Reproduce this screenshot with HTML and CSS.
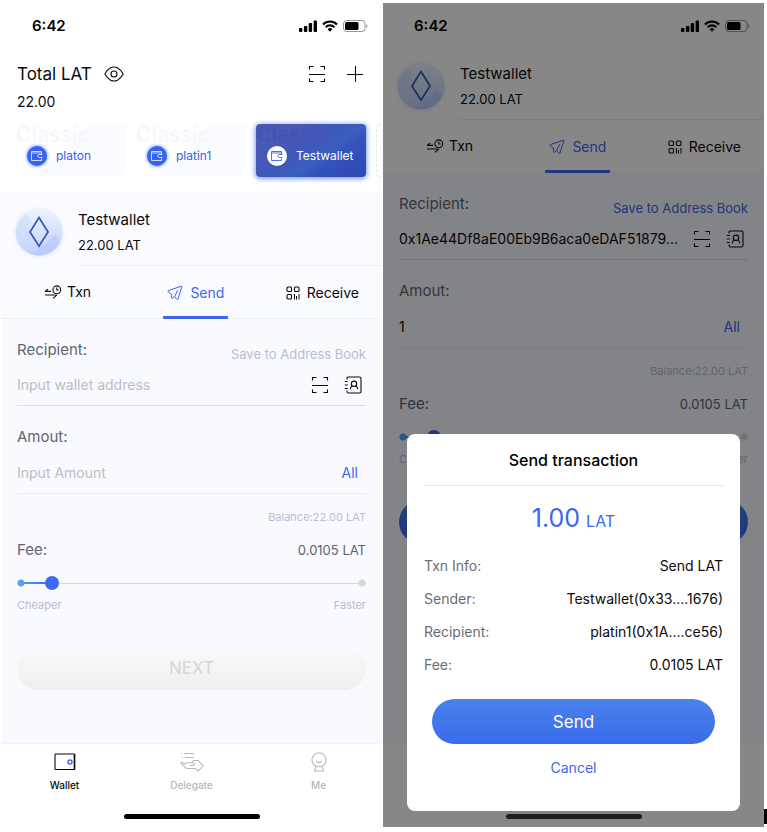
FILE: index.html
```html
<!DOCTYPE html>
<html lang="en">
<head>
<meta charset="utf-8">
<meta name="viewport" content="width=device-width, initial-scale=1">
<title>LAT Wallet</title>
<link rel="stylesheet" href="styles.css">
</head>
<body>
<svg class="sprite" aria-hidden="true">
  <symbol id="i-signal" viewBox="0 0 18 12"><rect x="0" y="8" width="3.400" height="4" rx="1"/><rect x="4.900" y="6" width="3.400" height="6" rx="1"/><rect x="9.700" y="3" width="3.400" height="9" rx="1"/><rect x="14.600" y="0.500" width="3.400" height="11.500" rx="1"/></symbol>
  <symbol id="i-wifi" viewBox="0 0 16 12"><path d="M1 4.400a10 10 0 0 1 14 0M3.600 7.200a6.300 6.300 0 0 1 8.800 0" fill="none" stroke="currentColor" stroke-width="2.100"/><path d="M5.600 9.200a3.400 3.400 0 0 1 4.800 0L8 11.800z"/></symbol>
  <symbol id="i-battery" viewBox="0 0 25 12"><rect x=".5" y=".5" width="21.500" height="11" rx="3" fill="none" stroke="currentColor" stroke-opacity=".4"/><rect x="2" y="2" width="13.500" height="8" rx="1.500"/><path d="M23.200 4v4q1.300-.6 1.300-2t-1.300-2" fill-opacity=".4"/></symbol>
  <symbol id="i-eye" viewBox="0 0 20 16"><path d="M.8 8Q3.400 3.600 6.600 1.800q3.400-1.600 6.800 0Q16.600 3.600 19.200 8q-2.600 4.400-5.800 6.200-3.400 1.600-6.800 0Q3.400 12.400.8 8z"/><circle cx="10" cy="8" r="3"/></symbol>
  <symbol id="i-scan" viewBox="0 0 18 18"><path d="M1.500 4.500v-3h4M12.500 1.500h4v3M1.500 13.500v3h4M12.500 16.500h4v-3M1 9.500h16"/></symbol>
  <symbol id="i-plus" viewBox="0 0 18 18"><path d="M1 9.500h16M9.500 1v16"/></symbol>
  <symbol id="i-purse" viewBox="0 0 12 10"><path d="M10.500 3V.5H.5v9h10V7.500M.5 2h10M11.500 3.500H8.200L6.500 5l1.700 1.500h3.300" stroke-width=".9"/></symbol>
  <symbol id="i-txn" viewBox="0 0 18 15"><circle cx="12.800" cy="4.800" r="3.900"/><path d="M12.800 2.600v2.400h2M1 6.400h6M1 6.400l3-2.200M1 10h10.500M13 9.800l-4 3.500"/></symbol>
  <symbol id="i-send" viewBox="0 0 16 16"><path d="M14.200 1.200q.8-.2.600.6L11 14.200q-.4.900-1 .1L7.600 11.400l-2 1.800q-.9.500-1-.5l-.4-3.700L1 6.600q-.6-.6.200-.9zM7.600 11.400l3.200-6.200"/></symbol>
  <symbol id="i-receive" viewBox="0 0 14 14"><rect x="1" y="1" width="4.500" height="4.500" rx="1"/><rect x="8.500" y="1" width="4.500" height="4.500" rx="1"/><rect x="1" y="8.500" width="4.500" height="4.500" rx="1"/><path d="M8.500 8v5.500M10.500 10v3.500M13 8v5.500" stroke-width="1"/></symbol>
  <symbol id="i-book" viewBox="0 0 18 18"><path d="M3 3.500V2.200Q3 1 4.500 1h11q1.500 0 1.500 1.500v13q0 1.500-1.500 1.500h-11Q3 17 3 15.500v-1M.8 5.500h3M.8 9h3M.8 12.500h3"/><circle cx="10" cy="7.800" r="2.700"/><path d="M6.500 13.200V12q.3-1.300 2.200-2.100M13.500 13.200V12q-.3-1.300-2.200-2.100"/></symbol>
  <symbol id="i-wallet" viewBox="0 0 22 18"><rect x="1" y="1" width="19.500" height="15.500" rx=".5"/><path d="M20.500 1v15.500" stroke-width="1.600"/><circle cx="16" cy="9" r="2" stroke="#3c6cf5" stroke-width="1.500"/></symbol>
  <symbol id="i-delegate" viewBox="0 0 24 20"><path d="M1 1.500h1.200M4 1.500h10M2 5.500h1.200M5 5.500h9M9.500 13.500h4q1.600-.8.400-2.200L9.800 10.800H7.200L4.500 12 2.300 10.200Q.8 10 1 11.400L5.500 15.600q1 .9 2.500.9h7l3.300 2.500 4.700-5.200-4.800-5.300h-4.700l-1.500 1.600"/></symbol>
  <symbol id="i-me" viewBox="0 0 16 20"><circle cx="8" cy="7.800" r="7"/><path d="M5 9q3 3.200 6 0M5 14.300 3.500 19h9L11 14.300"/></symbol>
  <symbol id="i-avatar" viewBox="0 0 48 48"><defs><linearGradient id="avatarFill" x1="0" y1="0" x2="0" y2="1"><stop offset="0" stop-color="#edf3fe"/><stop offset="1" stop-color="#c1cffb"/></linearGradient><clipPath id="avatarClip"><circle cx="24" cy="24" r="23.500"/></clipPath></defs><circle cx="24" cy="24" r="23.500" fill="url(#avatarFill)"/><g clip-path="url(#avatarClip)"><path d="M0 22 10 5l6 8L4 32zM6 30l10-10v12L10 40z" fill="#cbdcf8" opacity=".6"/><path d="M14 48 38 30l10 12-8 8zM32 34l8-8 8 12v10z" fill="#b1c3fa" opacity=".5"/></g><path d="M24 9.500 33 24l-9 14.200L15 24z" fill="none" stroke="#3158b8" stroke-width="1.700"/></symbol>
</svg>

<main class="board">
  <section class="screen" aria-label="Wallet">
    <header class="status">
      <span class="clock">6:42</span>
      <span class="status-icons"><svg class="signal"><use href="#i-signal"/></svg><svg class="wifi"><use href="#i-wifi"/></svg><svg class="battery"><use href="#i-battery"/></svg></span>
    </header>

    <div class="summary">
      <div class="summary-top">
        <h1 class="total">Total LAT</h1>
        <button class="icon-btn" type="button" aria-label="Hide balance"><svg class="line eye"><use href="#i-eye"/></svg></button>
        <div class="summary-actions">
          <button class="icon-btn" type="button" aria-label="Scan"><svg class="line i18"><use href="#i-scan"/></svg></button>
          <button class="icon-btn" type="button" aria-label="Add wallet"><svg class="line i18"><use href="#i-plus"/></svg></button>
        </div>
      </div>
      <p class="total-value">22.00</p>
    </div>

    <div class="cards">
      <button class="card" type="button"><span class="card-kind">Classic</span><span class="card-badge"><svg class="line purse"><use href="#i-purse"/></svg></span><span class="card-name">platon</span></button>
      <button class="card" type="button"><span class="card-kind">Classic</span><span class="card-badge"><svg class="line purse"><use href="#i-purse"/></svg></span><span class="card-name">platin1</span></button>
      <button class="card card-active" type="button"><span class="card-kind">Classic</span><span class="card-badge"><svg class="line purse"><use href="#i-purse"/></svg></span><span class="card-name">Testwallet</span></button>
      <button class="card card-add" type="button" aria-label="New wallet"></button>
    </div>

    <div class="account">
      <svg class="avatar"><use href="#i-avatar"/></svg>
      <div class="account-text"><h2 class="account-name">Testwallet</h2><p class="account-balance">22.00 LAT</p></div>
    </div>
    <nav class="tabs">
      <a class="tab tab-first" href="#txn"><svg class="line txn"><use href="#i-txn"/></svg>Txn</a>
      <a class="tab tab-active" href="#send"><svg class="line i16"><use href="#i-send"/></svg>Send</a>
      <a class="tab" href="#receive"><svg class="line i14"><use href="#i-receive"/></svg>Receive</a>
    </nav>

    <form class="form">
      <div class="row"><label class="label" for="to">Recipient:</label><button class="text-btn save" type="button" disabled>Save to Address Book</button></div>
      <div class="field">
        <input class="input" id="to" type="text" placeholder="Input wallet address">
        <button class="icon-btn" type="button" aria-label="Scan address"><svg class="line i18"><use href="#i-scan"/></svg></button>
        <button class="icon-btn" type="button" aria-label="Address book"><svg class="line i18"><use href="#i-book"/></svg></button>
      </div>
      <div class="row row-amount"><label class="label" for="amount">Amout:</label></div>
      <div class="field field-amount">
        <input class="input" id="amount" type="text" placeholder="Input Amount">
        <button class="text-btn all" type="button">All</button>
      </div>
      <p class="balance">Balance:22.00 LAT</p>
      <div class="row row-fee"><label class="label" for="fee">Fee:</label><output class="fee-value" for="fee">0.0105 LAT</output></div>
      <input class="slider" id="fee" type="range" min="0" max="200" value="17">
      <div class="scale"><span>Cheaper</span><span>Faster</span></div>
      <button class="next" type="button" disabled>NEXT</button>
    </form>

    <footer class="tabbar">
      <a class="nav nav-active" href="#wallet"><svg class="line nav-wallet"><use href="#i-wallet"/></svg>Wallet</a>
      <a class="nav" href="#delegate"><svg class="line nav-delegate"><use href="#i-delegate"/></svg>Delegate</a>
      <a class="nav" href="#me"><svg class="line nav-me"><use href="#i-me"/></svg>Me</a>
    </footer>
    <span class="home-bar"></span>
  </section>

  <section class="screen" aria-label="Confirm transaction">
    <header class="status">
      <span class="clock">6:42</span>
      <span class="status-icons"><svg class="signal"><use href="#i-signal"/></svg><svg class="wifi"><use href="#i-wifi"/></svg><svg class="battery"><use href="#i-battery"/></svg></span>
    </header>
    <div class="account account-plain">
      <svg class="avatar"><use href="#i-avatar"/></svg>
      <div class="account-text"><h2 class="account-name">Testwallet</h2><p class="account-balance">22.00 LAT</p></div>
    </div>
    <nav class="tabs tabs-plain">
      <a class="tab tab-first" href="#txn"><svg class="line txn"><use href="#i-txn"/></svg>Txn</a>
      <a class="tab tab-active" href="#send"><svg class="line i16"><use href="#i-send"/></svg>Send</a>
      <a class="tab" href="#receive"><svg class="line i14"><use href="#i-receive"/></svg>Receive</a>
    </nav>
    <form class="form">
      <div class="row"><label class="label" for="to2">Recipient:</label><button class="text-btn save" type="button">Save to Address Book</button></div>
      <div class="field">
        <input class="input" id="to2" type="text" value="0x1Ae44Df8aE00Eb9B6aca0eDAF51879...">
        <button class="icon-btn" type="button" aria-label="Scan address"><svg class="line i18"><use href="#i-scan"/></svg></button>
        <button class="icon-btn" type="button" aria-label="Address book"><svg class="line i18"><use href="#i-book"/></svg></button>
      </div>
      <div class="row row-amount"><label class="label" for="amount2">Amout:</label></div>
      <div class="field field-amount">
        <input class="input" id="amount2" type="text" value="1">
        <button class="text-btn all" type="button">All</button>
      </div>
      <p class="balance">Balance:22.00 LAT</p>
      <div class="row row-fee"><label class="label" for="fee2">Fee:</label><output class="fee-value" for="fee2">0.0105 LAT</output></div>
      <input class="slider" id="fee2" type="range" min="0" max="200" value="17">
      <div class="scale"><span>Cheaper</span><span>Faster</span></div>
      <button class="next next-ready" type="button" aria-label="Next"></button>
    </form>
    <footer class="tabbar"></footer>

    <div class="overlay">
      <div class="modal" role="dialog" aria-labelledby="modal-title">
        <h2 class="modal-title" id="modal-title">Send transaction</h2>
        <p class="modal-amount"><span>1.00</span><span class="unit">LAT</span></p>
        <dl class="details">
          <div class="detail"><dt>Txn Info:</dt><dd>Send LAT</dd></div>
          <div class="detail"><dt>Sender:</dt><dd>Testwallet(0x33....1676)</dd></div>
          <div class="detail"><dt>Recipient:</dt><dd>platin1(0x1A....ce56)</dd></div>
          <div class="detail"><dt>Fee:</dt><dd>0.0105 LAT</dd></div>
        </dl>
        <button class="modal-send" type="button">Send</button>
        <button class="modal-cancel" type="button">Cancel</button>
      </div>
    </div>
    <span class="home-bar home-bar-dim"></span>
  </section>
  <span class="caret"></span>
</main>
</body>
</html>
```
FILE: styles.css
```css
* { box-sizing: border-box; }

body {
  margin: 0;
  background: #fff;
  color: #0b0b0d;
  font-family: Inter, "Liberation Sans", sans-serif;
  font-size: 14px;
  line-height: 20px;
}

h1, h2, p, dl, dd { margin: 0; font-weight: 400; }
a { color: inherit; text-decoration: none; }
button, input { font: inherit; color: inherit; }
button { padding: 0; border: 0; background: none; }
svg { display: block; flex: none; fill: currentColor; }
.sprite { position: absolute; width: 0; height: 0; }

.line { fill: none; stroke: currentColor; stroke-width: 1.1; }
.i18 { width: 18px; height: 18px; }
.i16 { width: 16px; height: 16px; stroke-width: 1; }
.i14 { width: 14px; height: 14px; }

.board {
  position: relative;
  display: grid;
  grid-template-columns: 1fr 1fr;
  gap: 1px;
  min-height: 100vh;
  padding: 3px 3px 5px 1px;
}
.caret {
  position: absolute;
  right: 0;
  bottom: 8px;
  width: 3px;
  height: 15px;
  background: #000;
}

.screen {
  position: relative;
  display: flex;
  flex-direction: column;
  min-width: 0;
  overflow: hidden;
  background: #fff;
}

/* Status bar */
.status {
  display: flex;
  align-items: center;
  justify-content: space-between;
  height: 46px;
  padding: 0 14px 0 31px;
  color: #000;
}
.clock { font-size: 15px; font-weight: 600; line-height: 22px; }
.status-icons { display: flex; align-items: center; gap: 5px; }
.signal { width: 18px; height: 12px; }
.wifi { width: 16px; height: 12px; }
.battery { width: 25px; height: 12px; }

/* Balance summary */
.summary { padding: 12px 18px 0 16px; }
.summary-top { display: flex; align-items: center; gap: 12px; height: 26px; }
.total { font-size: 17px; }
.eye { width: 20px; height: 16px; }
.summary-actions { display: flex; gap: 20px; margin-left: auto; }
.total-value { margin-top: 5px; }

/* Wallet cards */
.cards { display: flex; gap: 10px; padding: 12px 0 16px 15px; }
.card {
  position: relative;
  display: flex;
  flex: 0 0 110px;
  align-items: flex-end;
  gap: 9px;
  height: 53px;
  padding: 0 0 11px 11px;
  border-radius: 4px;
  background: linear-gradient(135deg, #fff 45%, #f9fbff 46%, #fbfcff);
  color: #3c63e8;
  font-size: 12px;
}
.card-kind {
  position: absolute;
  top: 0;
  left: 0;
  color: #f6f7fc;
  font-size: 21px;
  font-weight: 600;
  line-height: 22px;
}
.card-badge {
  position: relative;
  display: flex;
  align-items: center;
  justify-content: center;
  width: 20px;
  height: 20px;
  border-radius: 50%;
  background: #3863f2;
  box-shadow: 0 0 3px 1px #9fb6fb;
  color: #dfe7ff;
}
.purse { width: 12px; height: 10px; }
.card-name { position: relative; line-height: 20px; }
.card-active {
  background: linear-gradient(145deg, #4a58b6 0 25%, #3f58b9 45%, #3a5fc0 60%, #3553bc 68%, #2c47b4);
  box-shadow: 0 1px 5px 1px #7e9af2;
  color: #fff;
}
.card-active .card-kind { color: #4155b5; }
.card-active .card-badge { background: #fff; box-shadow: none; color: #3c63e8; }
.card-add { background: #fff; border: 1px dashed #e3e5f1; }

/* Account header */
.account {
  display: flex;
  height: 73px;
  padding-left: 14px;
  background: #fafbff;
}
.avatar { width: 48px; height: 48px; margin: 15px 15px 0 0; filter: drop-shadow(0 1px 2px #dfe6fb); }
.account-text { flex: 1; padding-top: 16px; border-bottom: 1px solid #ebedf4; }
.account-name { font-size: 15px; line-height: 22px; }
.account-balance { margin-top: 5px; font-size: 13px; line-height: 18px; }
.account-plain { height: 71px; background: #fff; }
.account-plain .avatar { margin-top: 13px; }
.account-plain .account-text { padding-top: 14px; }

.tabs {
  display: flex;
  justify-content: space-between;
  height: 53px;
  padding: 0 23px 0 43px;
  border-bottom: 1px solid #eceff5;
  background: #fafbff;
}
.tabs-plain { background: #fff; border-color: #f8faff; }
.tab { display: flex; align-items: center; gap: 7px; padding-top: 2px; }
.tab-first { gap: 5px; padding: 0 15px 0 0; }
.txn { width: 18px; height: 15px; }
.tab-active {
  justify-content: center;
  width: 65px;
  margin-bottom: -1px;
  padding-top: 4px;
  border-bottom: 3px solid #3c66ee;
  border-radius: 1px;
  color: #3c66ee;
}

/* Transfer form */
.form {
  display: flex;
  flex: 1;
  flex-direction: column;
  padding: 20px 16px 0;
  background: #f8faff;
}
.row { display: flex; align-items: center; justify-content: space-between; height: 22px; }
.label { color: #61646e; font-size: 15px; }
.text-btn { color: #3c66ee; font-size: 14px; }
.save { padding-top: 8px; font-size: 13px; }
.save:disabled { color: #b9bcd3; }
.field {
  display: flex;
  align-items: center;
  gap: 15px;
  height: 45px;
  padding: 4px 4px 0 0;
  border-bottom: 1px solid #dcdfe8;
}
.input {
  flex: 1;
  min-width: 0;
  height: 20px;
  padding: 0;
  border: 0;
  outline: 0;
  background: none;
}
.input::placeholder { color: #babdc8; opacity: 1; }
.row-amount { margin-top: 20px; }
.field-amount { height: 46px; padding: 5px 8px 0 0; border-color: #e8ebf3; }
.balance { margin-top: 13px; color: #b9bcd3; font-size: 11px; text-align: right; }
.row-fee { margin-top: 12px; }
.fee-value { color: #5f626c; font-size: 13px; }
.slider {
  width: 100%;
  height: 14px;
  margin: 15px 0 0;
  appearance: none;
  background:
    radial-gradient(circle at 4px 7px, #559ff5 3px, transparent 4px),
    radial-gradient(circle at calc(100% - 4px) 7px, #d5d7df 3px, transparent 4px),
    linear-gradient(90deg, #559ff5, #3c66ee) 3px 6px / 32px 2px no-repeat,
    linear-gradient(#d5d7df, #d5d7df) 0 7px / 100% 1px no-repeat;
}
.slider::-webkit-slider-thumb {
  width: 14px;
  height: 14px;
  appearance: none;
  border-radius: 50%;
  background: #3e6af2;
}
.scale {
  display: flex;
  justify-content: space-between;
  margin-top: 5px;
  color: #b9bcd3;
  font-size: 11px;
}
.next {
  height: 44px;
  margin: 31px 0 53px;
  border-radius: 22px;
  background: linear-gradient(#fafafa, #eee);
  color: #d6d6d6;
  font-size: 17px;
}
.next-ready { background: linear-gradient(#4980ec, #3566e8); }

/* Bottom navigation */
.tabbar {
  display: grid;
  grid-template-columns: repeat(3, 1fr);
  height: 84px;
  border-top: 1px solid #f1f3f8;
  background: #fff;
}
.nav {
  display: flex;
  flex-direction: column;
  align-items: center;
  gap: 3px;
  padding-top: 8px;
  color: #b9b9bd;
  font-size: 10px;
  font-weight: 500;
}
.nav-active { color: #0b0b0d; }
.nav-wallet { width: 22px; height: 20px; }
.nav-delegate { width: 24px; height: 20px; }
.nav-me { width: 16px; height: 20px; }

.home-bar {
  position: absolute;
  bottom: 8px;
  left: calc(50% - 68px);
  width: 136px;
  height: 5px;
  border-radius: 3px;
  background: #000;
}
.home-bar-dim { background: #1f1f1f; }

/* Confirmation dialog */
.overlay {
  position: absolute;
  inset: 0;
  display: flex;
  align-items: flex-end;
  padding: 0 24px 16px;
  background: rgba(0, 0, 0, 0.47);
}
.modal {
  display: flex;
  flex: 1;
  flex-direction: column;
  padding: 0 17px 33px;
  border-radius: 8px;
  background: #fff;
}
.modal-title {
  padding: 15px 0 14px;
  border-bottom: 1px solid #e2e4ef;
  color: #000;
  font-size: 16px;
  font-weight: 500;
  line-height: 22px;
  text-align: center;
}
.modal-amount {
  display: flex;
  align-items: baseline;
  justify-content: center;
  gap: 6px;
  margin-top: 16px;
  color: #3c66ee;
  font-size: 25px;
  line-height: 32px;
}
.unit { font-size: 16px; }
.details { display: grid; gap: 13px; margin-top: 19px; }
.detail { display: flex; justify-content: space-between; }
.detail dt { color: #6a6d78; }
.modal-send {
  height: 45px;
  margin: 24px 8px 0;
  border-radius: 23px;
  background: linear-gradient(#4a82ec, #3a6bea);
  color: #fff;
  font-size: 17px;
}
.modal-cancel { margin-top: 14px; color: #3c66ee; }
```
